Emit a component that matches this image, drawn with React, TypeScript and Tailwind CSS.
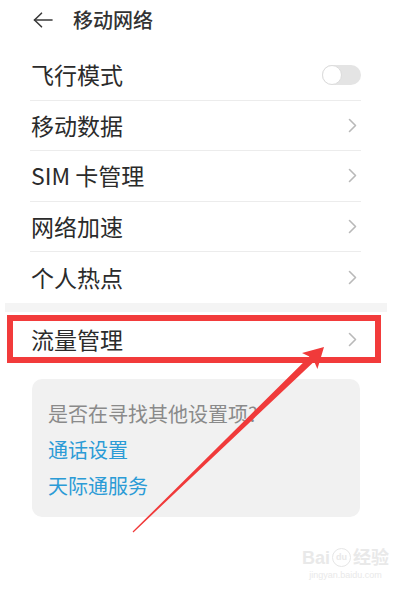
import React from "react";

const font = { fontFamily: '"Noto Sans CJK SC", "Noto Sans", sans-serif' };

function Chevron() {
  return (
    <svg width="9" height="15" viewBox="0 0 9 15" className="mr-[4px]">
      <polyline points="1.5,1.5 7.5,7.5 1.5,13.5" fill="none" stroke="#b9b9b9" strokeWidth="1.6" strokeLinecap="round" strokeLinejoin="round" />
    </svg>
  );
}

function Row({ label, last, toggle }: { label: string; last?: boolean; toggle?: boolean }) {
  return (
    <div className={`flex h-[50.5px] items-center justify-between ${last ? "" : "border-b border-[#ececec]"}`}>
      <span className="pl-[1px] text-[23px] leading-none text-[#2b2b2b]">{label}</span>
      {toggle ? (
        <div className="flex h-[20px] w-[39px] items-center rounded-full bg-[#e4e4e4]">
          <div className="h-[20px] w-[20px] rounded-full border border-[#dcdcdc] bg-white" />
        </div>
      ) : (
        <Chevron />
      )}
    </div>
  );
}

export default function App() {
  const rows = ["移动数据", "SIM 卡管理", "网络加速"];

  return (
    <div className="relative h-[602px] w-[420px] overflow-hidden bg-white" style={font}>
      {/* header */}
      <div className="flex h-[40px] items-center pl-[33px]">
        <svg width="20" height="16" viewBox="0 0 20 16">
          <line x1="1.5" y1="8" x2="19" y2="8" stroke="#3a3a3a" strokeWidth="1.6" strokeLinecap="round" />
          <polyline points="8.5,1.2 1.5,8 8.5,14.8" fill="none" stroke="#3a3a3a" strokeWidth="1.6" strokeLinecap="round" strokeLinejoin="round" />
        </svg>
        <span className="ml-[20px] text-[20px] font-medium text-[#333]">移动网络</span>
      </div>

      <div className="mt-[10px] pl-[30px] pr-[59px]">
        <Row label="飞行模式" toggle />
        {rows.map((r) => (
          <Row key={r} label={r} />
        ))}
        <Row label="个人热点" last />
      </div>

      <div className="ml-[5px] h-[9px] w-[382px] bg-[#f4f4f4]" />

      <div className="flex h-[56px] items-center justify-between pl-[31px] pr-[59px]">
        <span className="text-[23px] leading-none text-[#2b2b2b]">流量管理</span>
        <Chevron />
      </div>

      <div className="ml-[32px] mt-[11px] w-[328px] rounded-[10px] bg-[#f1f1f1] pb-[13px] pl-[16px] pt-[17px] text-[20px] leading-[36px]">
        <div className="text-[#8a8a8a]">是否在寻找其他设置项?</div>
        <div className="text-[#2b9bd6]">通话设置</div>
        <div className="text-[#2b9bd6]">天际通服务</div>
      </div>

      {/* watermark */}
      <div className="absolute left-[302px] top-[548px] flex flex-col items-center text-[#e9e9e9]">
        <div className="flex items-center gap-[2px] text-[18px] font-bold leading-none" style={{ fontFamily: '"Liberation Sans", "Noto Sans CJK SC", sans-serif' }}>
          <span>Bai</span>
          <span className="flex h-[19px] w-[19px] items-center justify-center rounded-full border border-[#e6e6e6] text-[9px]">du</span>
          <span>经验</span>
        </div>
        <div className="mt-[4px] text-[9px] leading-none" style={{ fontFamily: '"Liberation Sans", sans-serif' }}>jingyan.baidu.com</div>
      </div>

      {/* annotation: red box */}
      <div className="absolute left-[7px] top-[315px] h-[48px] w-[374px] border-[6px] border-[#f23b3b]" />

      {/* annotation: red arrow */}
      <svg className="absolute left-0 top-0" width="420" height="602" viewBox="0 0 420 602">
        <polygon
          points="133.4,532.4 314.2,361.4 317.4,368.9 324,347 302,353.1 309.4,356.4 132.6,531.6"
          fill="#f03a3a"
        />
      </svg>
    </div>
  );
}
